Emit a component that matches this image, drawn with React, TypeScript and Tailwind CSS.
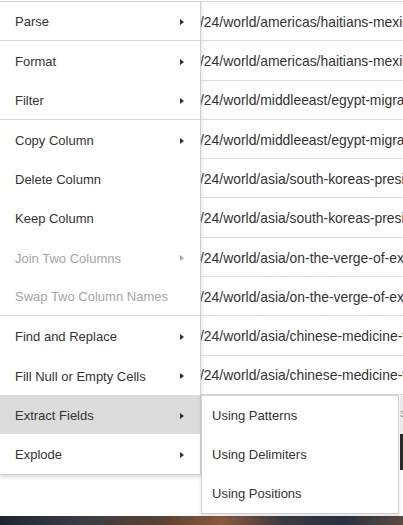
import React from 'react';

type Item = { label: string; sub?: boolean; disabled?: boolean; active?: boolean; divider?: boolean };

const items: Item[] = [
  { label: 'Parse', sub: true, divider: true },
  { label: 'Format', sub: true },
  { label: 'Filter', sub: true, divider: true },
  { label: 'Copy Column', sub: true },
  { label: 'Delete Column' },
  { label: 'Keep Column' },
  { label: 'Join Two Columns', sub: true, disabled: true },
  { label: 'Swap Two Column Names', disabled: true, divider: true },
  { label: 'Find and Replace', sub: true },
  { label: 'Fill Null or Empty Cells', sub: true },
  { label: 'Extract Fields', sub: true, active: true },
  { label: 'Explode', sub: true },
];

const rows = [
  '/24/world/americas/haitians-mexico-border',
  '/24/world/americas/haitians-mexico-border',
  '/24/world/middleeast/egypt-migrants-boat',
  '/24/world/middleeast/egypt-migrants-boat',
  '/24/world/asia/south-koreas-president',
  '/24/world/asia/south-koreas-president',
  '/24/world/asia/on-the-verge-of-extinction',
  '/24/world/asia/on-the-verge-of-extinction',
  '/24/world/asia/chinese-medicine-trade',
  '/24/world/asia/chinese-medicine-trade',
];

function Arrow({ disabled }: { disabled?: boolean }) {
  return (
    <span
      className={`block w-0 h-0 border-y-[3.5px] border-y-transparent border-l-[4px] ${
        disabled ? 'border-l-[#aaa]' : 'border-l-[#333]'
      }`}
    />
  );
}

export default function App() {
  return (
    <div
      className="relative w-[403px] h-[525px] overflow-hidden bg-white text-[13px] text-[#333]"
      style={{ fontFamily: '"Liberation Sans", Arial, sans-serif' }}
    >
      {/* table behind the menu */}
      <div className="flex flex-col h-full">
        <div className="h-px bg-white" />
        <div className="h-px bg-[#d6d6d6]" />
        {rows.map((r, i) => (
          <div key={i} className="flex h-[39.3px] shrink-0 border-b border-[#ddd] pt-[2px]">
            <div className="w-[200px] shrink-0" />
            <div className="flex items-center whitespace-nowrap overflow-hidden text-[13.9px]">{r}</div>
          </div>
        ))}
        <div className="flex h-[39.3px] shrink-0 justify-end">
          <div className="w-[3px] bg-[#eee] flex items-center text-[9px] text-[#888] overflow-hidden">3</div>
        </div>
        <div className="flex h-[36px] shrink-0 justify-end">
          <div className="w-[3px] bg-[#2b2b2b]" />
        </div>
        <div className="flex-1" />
        <div className="h-[9px] shrink-0 bg-[linear-gradient(90deg,#1f2530_0%,#3a3d45_20%,#5a4030_40%,#8a5a3a_55%,#3d3a40_70%,#2a3140_85%,#5a4a40_100%)]" />
      </div>

      {/* main context menu */}
      <div className="absolute left-0 top-[2px] w-[201px] bg-white border-r border-b border-[#cfcfcf] shadow-[0_2px_4px_rgba(0,0,0,0.15)]">
        {items.map((it) => (
          <div
            key={it.label}
            className={`flex items-center justify-between h-[39.3px] pt-[2px] pl-[15px] pr-[16px] ${
              it.divider ? 'border-b border-[#d6d6d6]' : ''
            } ${it.active ? 'bg-[#dcdcdc]' : ''} ${it.disabled ? 'text-[#a5a5a5]' : ''}`}
          >
            <span>{it.label}</span>
            {it.sub && <Arrow disabled={it.disabled} />}
          </div>
        ))}
      </div>

      {/* submenu */}
      <div className="absolute left-[201px] top-[395px] w-[198px] bg-white border border-[#d0d0d0] shadow-[0_2px_4px_rgba(0,0,0,0.12)]">
        {['Using Patterns', 'Using Delimiters', 'Using Positions'].map((s) => (
          <div key={s} className="flex items-center h-[39px] pl-[10px]">
            {s}
          </div>
        ))}
      </div>
    </div>
  );
}
